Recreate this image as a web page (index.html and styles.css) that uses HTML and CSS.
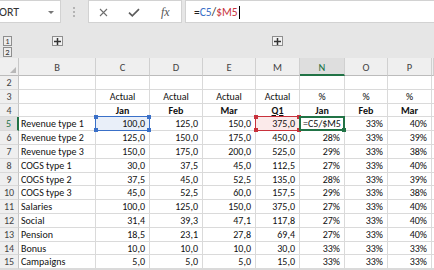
FILE: index.html
```html
<!DOCTYPE html>
<html>
<head>
<meta charset="utf-8">
<link rel="stylesheet" href="styles.css">
</head>
<body>
<div class="fbar">
  <div class="namebox"><span class="name">ORT</span><span class="dd"></span></div>
  <div class="grip"><span class="dots"></span></div>
  <div class="fbtns">
    <svg class="ic-x" width="9" height="9" viewBox="0 0 9 9"><path d="M1 1L8 8M8 1L1 8" stroke="#6e6e6e" stroke-width="1.1" fill="none"/></svg>
    <svg class="ic-ok" width="12" height="9" viewBox="0 0 12 9"><path d="M1 4.6L4.3 7.8L11 1.2" stroke="#5c5c5c" stroke-width="1.7" fill="none"/></svg>
    <span class="fx">fx</span>
  </div>
  <div class="formula"><span class="op">=</span><span class="rb">C5</span><span class="op">/</span><span class="rr">$M5</span><span class="caret"></span></div>
</div>

<div class="outline">
  <div class="levels"><span class="lvl">1</span><span class="lvl">2</span></div>
  <span class="plus plus-b"><svg width="7" height="7" viewBox="0 0 7 7"><path d="M0 3.5H7M3.5 0V7" stroke="#333" stroke-width="1.5"/></svg></span>
  <span class="plus plus-m"><svg width="7" height="7" viewBox="0 0 7 7"><path d="M0 3.5H7M3.5 0V7" stroke="#333" stroke-width="1.5"/></svg></span>
</div>

<div class="sheet">
  <div class="corner"><span class="tri"></span></div>
  <div class="hd">B</div><div class="hd">C</div><div class="hd">D</div><div class="hd">E</div><div class="hd">M</div><div class="hd sel">N</div><div class="hd">O</div><div class="hd">P</div><div class="hd"></div>

  <div class="rh">2</div><div class="c"></div><div class="c"></div><div class="c"></div><div class="c"></div><div class="c"></div><div class="c"></div><div class="c"></div><div class="c"></div><div class="c"></div>

  <div class="rh">3</div><div class="c"></div><div class="c ctr">Actual</div><div class="c ctr">Actual</div><div class="c ctr">Actual</div><div class="c ctr">Actual</div><div class="c ctr">%</div><div class="c ctr">%</div><div class="c ctr">%</div><div class="c"></div>

  <div class="rh">4</div><div class="c"></div><div class="c ctr b">Jan</div><div class="c ctr b">Feb</div><div class="c ctr b">Mar</div><div class="c ctr b"><span class="u">Q1</span></div><div class="c ctr b">Jan</div><div class="c ctr b">Feb</div><div class="c ctr b">Mar</div><div class="c"></div>

  <div class="rh sel">5</div><div class="c">Revenue type 1</div><div class="c n fill-blue hl">100,0<span class="ref ref-blue"><i class="sq tl"></i><i class="sq tr"></i><i class="sq bl"></i><i class="sq br"></i></span></div><div class="c n">125,0</div><div class="c n">150,0</div><div class="c n fill-red hl">375,0<span class="ref ref-red"><i class="sq tl"></i><i class="sq tr"></i><i class="sq bl"></i><i class="sq br"></i></span></div><div class="c edit hl">=C5/$M5<span class="active"><i class="sq br"></i></span></div><div class="c n">33%</div><div class="c n">40%</div><div class="c"></div>

  <div class="rh">6</div><div class="c">Revenue type 2</div><div class="c n">125,0</div><div class="c n">150,0</div><div class="c n">175,0</div><div class="c n">450,0</div><div class="c n">28%</div><div class="c n">33%</div><div class="c n">39%</div><div class="c"></div>

  <div class="rh">7</div><div class="c">Revenue type 3</div><div class="c n">150,0</div><div class="c n">175,0</div><div class="c n">200,0</div><div class="c n">525,0</div><div class="c n">29%</div><div class="c n">33%</div><div class="c n">38%</div><div class="c"></div>

  <div class="rh">8</div><div class="c">COGS type 1</div><div class="c n">30,0</div><div class="c n">37,5</div><div class="c n">45,0</div><div class="c n">112,5</div><div class="c n">27%</div><div class="c n">33%</div><div class="c n">40%</div><div class="c"></div>

  <div class="rh">9</div><div class="c">COGS type 2</div><div class="c n">37,5</div><div class="c n">45,0</div><div class="c n">52,5</div><div class="c n">135,0</div><div class="c n">28%</div><div class="c n">33%</div><div class="c n">39%</div><div class="c"></div>

  <div class="rh">10</div><div class="c">COGS type 3</div><div class="c n">45,0</div><div class="c n">52,5</div><div class="c n">60,0</div><div class="c n">157,5</div><div class="c n">29%</div><div class="c n">33%</div><div class="c n">38%</div><div class="c"></div>

  <div class="rh">11</div><div class="c">Salaries</div><div class="c n">100,0</div><div class="c n">125,0</div><div class="c n">150,0</div><div class="c n">375,0</div><div class="c n">27%</div><div class="c n">33%</div><div class="c n">40%</div><div class="c"></div>

  <div class="rh">12</div><div class="c">Social</div><div class="c n">31,4</div><div class="c n">39,3</div><div class="c n">47,1</div><div class="c n">117,8</div><div class="c n">27%</div><div class="c n">33%</div><div class="c n">40%</div><div class="c"></div>

  <div class="rh">13</div><div class="c">Pension</div><div class="c n">18,5</div><div class="c n">23,1</div><div class="c n">27,8</div><div class="c n">69,4</div><div class="c n">27%</div><div class="c n">33%</div><div class="c n">40%</div><div class="c"></div>

  <div class="rh">14</div><div class="c">Bonus</div><div class="c n">10,0</div><div class="c n">10,0</div><div class="c n">10,0</div><div class="c n">30,0</div><div class="c n">33%</div><div class="c n">33%</div><div class="c n">33%</div><div class="c"></div>

  <div class="rh">15</div><div class="c">Campaigns</div><div class="c n">5,0</div><div class="c n">5,0</div><div class="c n">5,0</div><div class="c n">15,0</div><div class="c n">33%</div><div class="c n">33%</div><div class="c n">33%</div><div class="c"></div>
</div>
</body>
</html>
```

FILE: styles.css
```css
html, body {
  margin: 0;
  padding: 0;
}
body {
  width: 434px;
  height: 270px;
  overflow: hidden;
  background: #e6e6e6;
  font-family: "Carlito", "Liberation Sans", Arial, sans-serif;
}

/* formula bar */
.fbar {
  display: flex;
  height: 23px;
}
.namebox {
  width: 61px;
  box-sizing: border-box;
  background: #fff;
  border: 1px solid #d2d2d2;
  border-left: 0;
  display: flex;
  align-items: center;
  justify-content: space-between;
  padding: 1px 6px 0 0;
  font-size: 12px;
  color: #333;
}
.name {
  margin-left: -1px;
}
.dd {
  width: 0;
  height: 0;
  border-left: 3px solid transparent;
  border-right: 3px solid transparent;
  border-top: 3px solid #777;
}
.grip {
  width: 27px;
  display: flex;
  align-items: center;
  padding-left: 12px;
  box-sizing: border-box;
}
.dots {
  width: 2px;
  height: 10px;
  background: repeating-linear-gradient(#b4b4b4 0 2px, transparent 2px 4px);
}
.fbtns {
  width: 94px;
  box-sizing: border-box;
  background: #fff;
  border: 1px solid #d2d2d2;
  display: flex;
  align-items: center;
  padding: 2px 0 0 10px;
}
.ic-ok {
  margin-left: 20px;
}
.fx {
  margin-left: 21px;
  font-family: "Liberation Serif", serif;
  font-style: italic;
  font-size: 12px;
  color: #555;
}
.formula {
  flex: 1;
  margin-left: 3px;
  background: #fff;
  border: 1px solid #d2d2d2;
  border-right: 0;
  display: flex;
  align-items: center;
  padding: 1px 0 0 8px;
  font-size: 11.5px;
  color: #222;
}
.rb { color: #3a70c8; }
.rr { color: #c8323c; }
.caret {
  width: 1px;
  height: 13px;
  background: #000;
  margin-left: 1px;
}

/* outline strip */
.outline {
  height: 35px;
  box-sizing: border-box;
  padding-top: 13px;
  display: grid;
  grid-template-columns: 19px 77px 54px 53px 53px 44px 45px 43px 44px 2px;
  align-items: start;
}
.levels {
  grid-column: 1;
  display: flex;
  flex-direction: column;
  gap: 1px;
  padding-left: 3px;
}
.lvl {
  width: 9px;
  height: 10px;
  box-sizing: border-box;
  border: 1px solid #8e8e8e;
  background: #ededed;
  font-size: 8.5px;
  line-height: 8px;
  text-align: center;
  color: #333;
}
.plus {
  width: 11px;
  height: 10px;
  box-sizing: border-box;
  border: 1px solid #8e8e8e;
  background: #f2f2f2;
  display: flex;
  align-items: center;
  justify-content: center;
}
.plus-b {
  grid-column: 2;
  margin-left: 33px;
}
.plus-m {
  grid-column: 6;
  margin-left: 16px;
}

/* sheet */
.sheet {
  display: grid;
  grid-template-columns: 19px 77px 54px 53px 53px 44px 45px 43px 44px 2px;
  grid-template-rows: 18px 14px 14px 13px 14px 14px 14px 14px 13px 14px 14px 14px 14px 13px 14px;
  font-size: 10px;
  color: #111;
  border-bottom: 1px solid #dadada;
}
.corner {
  background: #efefef;
  border-right: 1px solid #c8c8c8;
  border-bottom: 1px solid #bcbcbc;
  box-sizing: border-box;
  display: flex;
  align-items: flex-end;
  justify-content: flex-end;
  padding: 0 2px 2px 0;
}
.tri {
  width: 0;
  height: 0;
  border-left: 6px solid transparent;
  border-bottom: 6px solid #b8b8b8;
}
.hd {
  background: #efefef;
  border-right: 1px solid #d0d0d0;
  border-bottom: 1px solid #bcbcbc;
  box-sizing: border-box;
  display: flex;
  align-items: center;
  justify-content: center;
  padding-top: 2px;
  font-size: 10.5px;
  color: #444;
}
.hd.sel {
  background: #dedede;
  border-bottom: 2px solid #217346;
  color: #217346;
}
.rh {
  background: #efefef;
  border-right: 1px solid #c4c4c4;
  border-bottom: 1px solid #d9d9d9;
  box-sizing: border-box;
  display: flex;
  align-items: center;
  justify-content: center;
  font-size: 10px;
  color: #444;
}
.rh.sel {
  background: #e0e0e0;
  border-right: 2px solid #217346;
  color: #217346;
}
.c {
  background: #fff;
  border-right: 1px solid #dadada;
  border-bottom: 1px solid #dadada;
  box-sizing: border-box;
  display: flex;
  align-items: center;
  padding: 0 4px 0 2px;
  white-space: nowrap;
  overflow: hidden;
}
.n { justify-content: flex-end; }
.ctr { justify-content: center; padding: 0; }
.b { font-weight: bold; }
.u { text-decoration: underline; }
.fill-blue { background: #e9eff9; }
.fill-red { background: #fbeaea; }
.edit { padding-left: 3px; }

/* range highlights */
.hl {
  position: relative;
  overflow: visible;
}
.ref, .active {
  position: absolute;
  left: -1px;
  top: -1px;
  right: -1px;
  bottom: -1px;
  border: 1px solid;
  z-index: 2;
}
.ref-blue {
  border-color: #3a70c8;
  color: #3a70c8;
}
.ref-red {
  border-color: #c8323c;
  color: #c8323c;
}
.active {
  border: 2px solid #217346;
  color: #217346;
  z-index: 3;
}
.sq {
  position: absolute;
  width: 4px;
  height: 4px;
  background: currentColor;
}
.tl { left: -2px; top: -2px; }
.tr { right: -2px; top: -2px; }
.bl { left: -2px; bottom: -2px; }
.br { right: -2px; bottom: -2px; }
.active .br { right: -3px; bottom: -3px; }
```
